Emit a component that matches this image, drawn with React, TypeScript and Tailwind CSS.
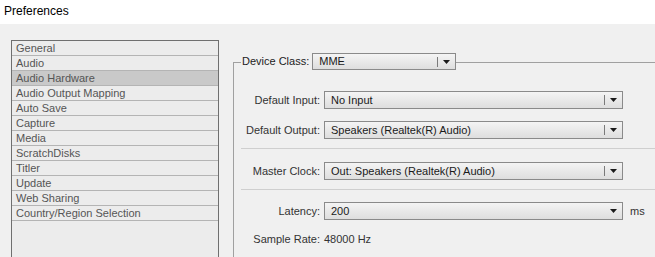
import React from "react";

const categories = [
  "General",
  "Audio",
  "Audio Hardware",
  "Audio Output Mapping",
  "Auto Save",
  "Capture",
  "Media",
  "ScratchDisks",
  "Titler",
  "Update",
  "Web Sharing",
  "Country/Region Selection",
];

function Arrow() {
  return (
    <svg width="7" height="4" viewBox="0 0 7 4" className="block">
      <path d="M0 0h7L3.5 4z" fill="#1a1a1a" />
    </svg>
  );
}

function Select({
  value,
  width,
  height = "h-[18px]",
  divider = true,
}: {
  value: string;
  width: string;
  height?: string;
  divider?: boolean;
}) {
  return (
    <div
      className={`${width} ${height} flex items-center border border-[#8a8a8a] bg-gradient-to-b from-[#f4f4f4] to-[#dedede] shrink-0`}
    >
      <span className="flex-1 pl-[6px] text-[11px] text-[#1a1a1a] leading-none truncate">
        {value}
      </span>
      <div className="w-[18px] h-full flex items-center relative">
        {divider && <div className="w-px h-[10px] bg-[#7a7a7a]" />}
        <div className="flex-1 flex justify-center">
          <Arrow />
        </div>
      </div>
    </div>
  );
}

function Row({
  label,
  className,
  children,
}: {
  label: string;
  className?: string;
  children: React.ReactNode;
}) {
  return (
    <div className={`flex items-center gap-[4px] ${className ?? ""}`}>
      <span className="w-[79px] text-right text-[11px] text-[#333] whitespace-nowrap shrink-0">
        {label}
      </span>
      {children}
    </div>
  );
}

export default function App() {
  return (
    <div
      className="w-[655px] h-[257px] overflow-hidden bg-[#f0f0f0]"
      style={{ fontFamily: '"Liberation Sans", Arial, sans-serif' }}
    >
      <div className="h-[24px] bg-white pl-[4px] pt-[2px] text-[12px] text-black">
        Preferences
      </div>

      <div className="flex">
        {/* category list */}
        <div className="ml-[11px] mt-[16px] w-[208px] h-[240px] border border-[#6f6f6f] bg-[#ececec] shrink-0">
          {categories.map((c) => (
            <div
              key={c}
              className={`h-[15px] pl-[4px] flex items-center border-b border-[#b4b4b4] text-[11px] text-[#555] leading-none whitespace-nowrap ${
                c === "Audio Hardware" ? "bg-[#c9c9c9]" : ""
              }`}
            >
              {c}
            </div>
          ))}
        </div>

        {/* audio hardware group */}
        <div className="ml-[14px] mt-[29px] flex-1 flex flex-col">
          <div className="flex h-[17px]">
            <div className="w-[8px] mt-[9px] border-l border-t border-[#a0a0a0]" />
            <span className="ml-[1px] pr-[3px] text-[11px] text-[#222] self-center whitespace-nowrap">
              Device Class:
            </span>
            <Select value="MME" width="w-[144px]" height="h-[17px]" />
            <div className="flex-1 mt-[9px] h-px bg-[#a0a0a0]" />
          </div>

          <div className="border-l border-[#a0a0a0] pl-[7px] h-[200px] flex flex-col">
            <Row label="Default Input:" className="mt-[21px]">
              <Select value="No Input" width="w-[299px]" />
            </Row>
            <Row label="Default Output:" className="mt-[12px]">
              <Select value="Speakers (Realtek(R) Audio)" width="w-[299px]" />
            </Row>
            <div className="mt-[9px] h-px bg-[#cfcfcf]" />
            <Row label="Master Clock:" className="mt-[13px]">
              <Select value="Out: Speakers (Realtek(R) Audio)" width="w-[299px]" />
            </Row>
            <div className="mt-[9px] h-px bg-[#cfcfcf]" />
            <Row label="Latency:" className="mt-[12px]">
              <Select value="200" width="w-[299px]" divider={false} />
              <span className="ml-[3px] text-[11px] text-[#333]">ms</span>
            </Row>
            <Row label="Sample Rate:" className="mt-[10px] h-[18px]">
              <span className="text-[11px] text-[#333]">48000 Hz</span>
            </Row>
          </div>
        </div>
      </div>
    </div>
  );
}
